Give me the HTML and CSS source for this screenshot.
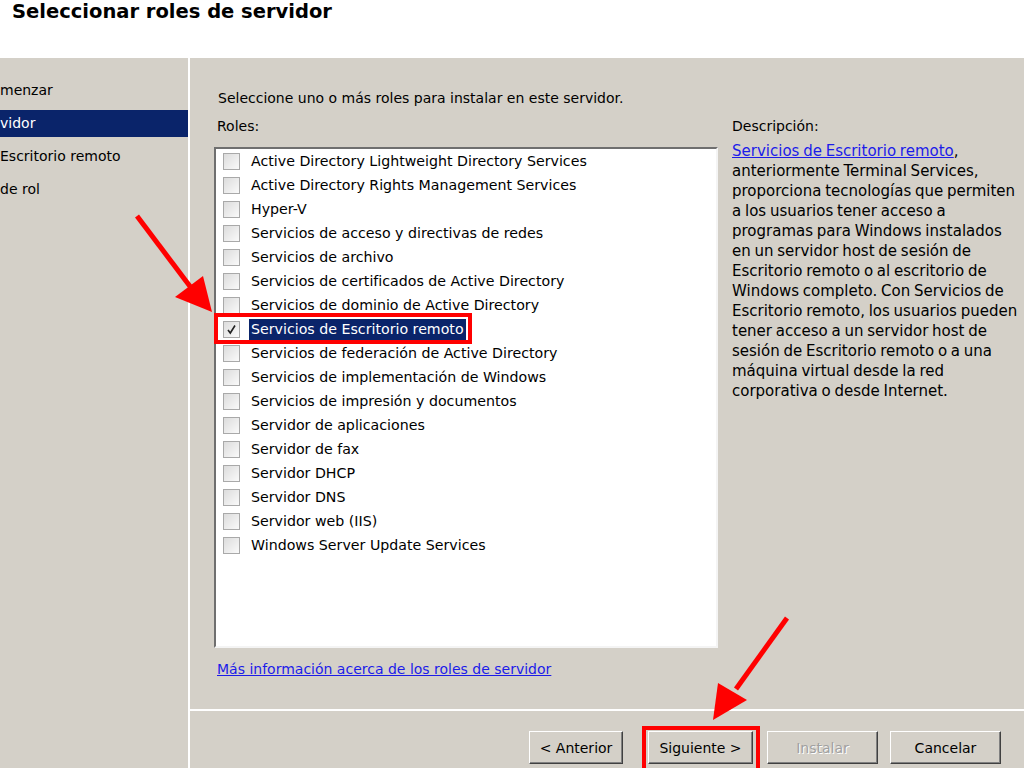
FILE: index.html
```html
<!DOCTYPE html>
<html lang="es">
<head>
    <meta charset="UTF-8">
    <meta name="viewport" content="width=device-width, initial-scale=1.0">
    <title>Asistente para agregar roles</title>
    <link rel="stylesheet" href="styles.css">
</head>
<body>
    <header class="title-bar">
        <h1>Seleccionar roles de servidor</h1>
    </header>

    <div class="wizard">
        <nav class="steps">
            <div class="step">menzar</div>
            <div class="step active">vidor</div>
            <div class="step">Escritorio remoto</div>
            <div class="step">de rol</div>
        </nav>

        <main class="content">
            <div class="content-body">
                <p class="intro">Seleccione uno o más roles para instalar en este servidor.</p>
                <div class="columns">
                    <div class="roles-col">
                        <div class="label">Roles:</div>
                        <ul class="role-list">
                            <li class="role"><span class="check"></span><span class="role-name">Active Directory Lightweight Directory Services</span></li>
                            <li class="role"><span class="check"></span><span class="role-name">Active Directory Rights Management Services</span></li>
                            <li class="role"><span class="check"></span><span class="role-name">Hyper-V</span></li>
                            <li class="role"><span class="check"></span><span class="role-name">Servicios de acceso y directivas de redes</span></li>
                            <li class="role"><span class="check"></span><span class="role-name">Servicios de archivo</span></li>
                            <li class="role"><span class="check"></span><span class="role-name">Servicios de certificados de Active Directory</span></li>
                            <li class="role"><span class="check"></span><span class="role-name">Servicios de dominio de Active Directory</span></li>
                            <li class="role selected">
                                <span class="check checked">
                                    <svg width="11" height="11" viewBox="0 0 11 11"><path d="M2 6 L4.3 9 L9 1.5" fill="none" stroke="#222" stroke-width="1.6"/></svg>
                                </span><span class="role-name">Servicios de Escritorio remoto</span>
                            </li>
                            <li class="role"><span class="check"></span><span class="role-name">Servicios de federación de Active Directory</span></li>
                            <li class="role"><span class="check"></span><span class="role-name">Servicios de implementación de Windows</span></li>
                            <li class="role"><span class="check"></span><span class="role-name">Servicios de impresión y documentos</span></li>
                            <li class="role"><span class="check"></span><span class="role-name">Servidor de aplicaciones</span></li>
                            <li class="role"><span class="check"></span><span class="role-name">Servidor de fax</span></li>
                            <li class="role"><span class="check"></span><span class="role-name">Servidor DHCP</span></li>
                            <li class="role"><span class="check"></span><span class="role-name">Servidor DNS</span></li>
                            <li class="role"><span class="check"></span><span class="role-name">Servidor web (IIS)</span></li>
                            <li class="role"><span class="check"></span><span class="role-name">Windows Server Update Services</span></li>
                        </ul>
                        <a class="more-link" href="#">Más información acerca de los roles de servidor</a>
                    </div>

                    <div class="desc-col">
                        <div class="label">Descripción:</div>
                        <p class="desc">
                            <a href="#">Servicios de Escritorio remoto</a>,<br>
                            anteriormente Terminal Services,<br>
                            proporciona tecnologías que permiten<br>
                            a los usuarios tener acceso a<br>
                            programas para Windows instalados<br>
                            en un servidor host de sesión de<br>
                            Escritorio remoto o al escritorio de<br>
                            Windows completo. Con Servicios de<br>
                            Escritorio remoto, los usuarios pueden<br>
                            tener acceso a un servidor host de<br>
                            sesión de Escritorio remoto o a una<br>
                            máquina virtual desde la red<br>
                            corporativa o desde Internet.
                        </p>
                    </div>
                </div>
            </div>

            <footer class="buttons">
                <button class="btn btn-prev">&lt; Anterior</button>
                <button class="btn btn-next">Siguiente &gt;</button>
                <button class="btn btn-install" disabled>Instalar</button>
                <button class="btn btn-cancel">Cancelar</button>
            </footer>
        </main>
    </div>

    <!-- red arrows drawn over the screenshot -->
    <svg class="annotations" width="1024" height="768" viewBox="0 0 1024 768">
        <line x1="137" y1="216" x2="192" y2="289" stroke="#f00" stroke-width="5"/>
        <polygon points="175,297 203,276 212,312" fill="#f00"/>
        <line x1="787" y1="618" x2="736" y2="689" stroke="#f00" stroke-width="5"/>
        <polygon points="718,683 747,700 713,720" fill="#f00"/>
    </svg>
</body>
</html>
```

FILE: styles.css
```css
body {
    margin: 0;
    width: 1024px;
    height: 768px;
    overflow: hidden;
    position: relative;
    font-family: "DejaVu Sans", Verdana, sans-serif;
    font-size: 14px;
    color: #000;
    background: #fff;
}
.title-bar {
    height: 58px;
    background: #fff;
}
.title-bar h1 {
    margin: 0;
    padding: 0 0 0 12px;
    font-size: 19.5px;
    line-height: 24px;
    font-weight: bold;
}
.wizard {
    display: flex;
    height: 710px;
    background: #d4d0c8;
}
.steps {
    width: 188px;
    padding-top: 19px;
    border-right: 2px solid #fff;
    overflow: hidden;
    flex-shrink: 0;
}
.step {
    height: 27px;
    line-height: 27px;
    margin-bottom: 6px;
    white-space: nowrap;
}
.step.active {
    background: #0a246a;
    color: #fff;
}
.content {
    flex: 1;
    display: flex;
    flex-direction: column;
}
.content-body {
    flex: 1;
    padding: 32px 0 0 24px;
}
.intro {
    margin: 0 0 12px 4px;
    line-height: 16px;
}
.columns {
    display: flex;
    gap: 14px;
}
.roles-col {
    width: 504px;
}
.label {
    line-height: 16px;
    margin-left: 3px;
    margin-bottom: 13px;
}
.desc-col .label {
    margin-left: 0;
    margin-bottom: 7px;
}
.role-list {
    list-style: none;
    margin: 0;
    padding: 0;
    height: 497px;
    background: #fff;
    border: 2px solid;
    border-color: #6f6f6f #f4f4f4 #f4f4f4 #6f6f6f;
}
.role {
    position: relative;
    display: flex;
    align-items: center;
    height: 24px;
    padding-left: 7px;
    white-space: nowrap;
    font-size: 14.2px;
}
.check {
    width: 15px;
    height: 15px;
    border: 1px solid #a9a9a9;
    background: linear-gradient(135deg, #dcdcdc, #fafafa);
    margin-right: 9px;
    display: flex;
    align-items: center;
    justify-content: center;
}
.role-name {
    padding: 0 2px;
    line-height: 21px;
}
.role.selected .role-name {
    background: #0a246a;
    color: #fff;
}
.role.selected::after {
    content: "";
    position: absolute;
    left: -2px;
    top: -4px;
    width: 250px;
    height: 23px;
    border: 4px solid #f00;
}
.more-link {
    display: inline-block;
    margin-top: 13px;
    margin-left: 3px;
    color: #1c1ce8;
    line-height: 16px;
}
.desc-col {
    width: 292px;
}
.desc {
    margin: 0;
    font-size: 15px;
    line-height: 20px;
    word-spacing: -1px;
    white-space: nowrap;
}
.desc a {
    color: #1c1ce8;
}
.buttons {
    height: 59px;
    border-top: 2px solid #fff;
    display: flex;
    align-items: flex-start;
    padding-top: 20px;
    box-sizing: border-box;
}
.btn {
    position: relative;
    height: 33px;
    font-family: inherit;
    font-size: 14px;
    background: #d4d0c8;
    color: #000;
    border: 1px solid;
    border-color: #fff #404040 #404040 #fff;
    box-shadow: inset -1px -1px 0 #808080;
    padding: 0;
}
.btn-prev {
    margin-left: 339px;
    width: 94px;
}
.btn-next {
    margin-left: 25px;
    width: 105px;
}
.btn-next::after {
    content: "";
    position: absolute;
    left: -7px;
    top: -6px;
    width: 110px;
    height: 44px;
    border: 4px solid #f00;
}
.btn-install {
    margin-left: 14px;
    width: 111px;
    color: #a0a0a0;
    text-shadow: 1px 1px 0 #fff;
}
.btn-cancel {
    margin-left: 12px;
    width: 111px;
}
.annotations {
    position: absolute;
    top: 0;
    left: 0;
    pointer-events: none;
}
```
